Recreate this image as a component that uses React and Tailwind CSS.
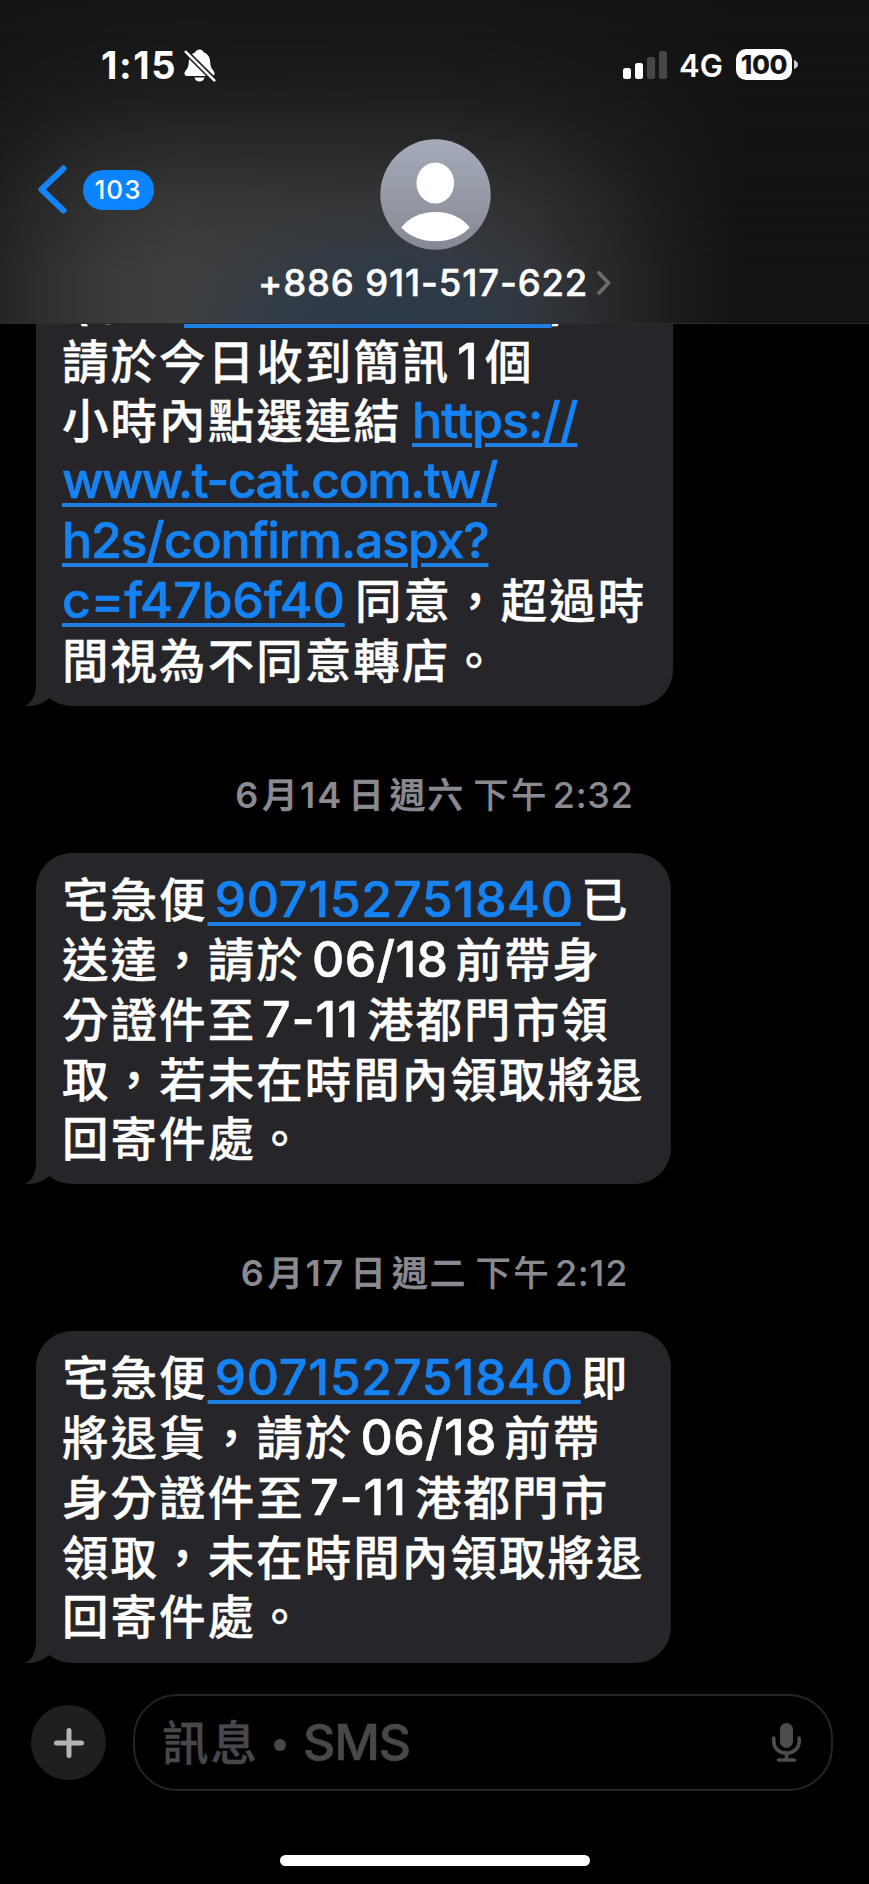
const LATIN = "font-['Inter','Noto_Sans_CJK_TC',sans-serif]";
const CJK = "font-['Noto_Sans_CJK_TC','Inter',sans-serif]";

function Han({ children, className = "" }) {
  return (
    <span className={`${CJK} text-[46.5px] tracking-[2.05px] [-webkit-text-stroke:0.35px] ${className}`}>
      {children}
    </span>
  );
}

function Num({ children, className = "" }) {
  return (
    <span className={`${LATIN} text-[50px] font-medium [-webkit-text-stroke:0.6px] ${className}`}>
      {children}
    </span>
  );
}

function Link({ children, className = "" }) {
  return (
    <a
      className={`${LATIN} whitespace-pre text-[50px] font-medium text-[#1683f5] underline decoration-[#1f7fe2] decoration-[4px] underline-offset-[5px] [-webkit-text-stroke:0.6px] ${className}`}
    >
      {children}
    </a>
  );
}

function Line({ children }) {
  return (
    <div className="flex h-[59.8px] items-baseline whitespace-nowrap leading-[40px] before:h-[49.3px] before:w-0 before:content-['']">
      {children}
    </div>
  );
}

function Bubble({ children, className = "" }) {
  return (
    <div
      className={`relative ml-9 rounded-[36px] bg-[#26252a] pl-[26px] font-medium text-white ${className}`}
    >
      {children}
      <svg
        className="absolute bottom-0 -left-3"
        width="40"
        height="40"
        viewBox="0 0 40 40"
        fill="#26252a"
      >
        <path d="M12 0V18C12 29 8 37 .5 40C10 41 19 37.500 26 31.500L32 20Z" />
      </svg>
    </div>
  );
}

function StampHan({ children, className = "" }) {
  return (
    <span className={`${CJK} text-[35.500px] tracking-[2.200px] ${className}`}>{children}</span>
  );
}

function Stamp({ month, day, weekday, time, className = "" }) {
  return (
    <div
      className={`flex h-[40px] items-baseline justify-center whitespace-nowrap font-medium text-[#8b8a90] ${LATIN} text-[36px] leading-[40px] ${className}`}
    >
      <span className="w-[27px] font-semibold">{month}</span>
      <StampHan className="[-webkit-text-stroke:0.7px]">月</StampHan>
      <span className="mr-[5px] font-semibold tracking-[2px]">{day}</span>
      <StampHan className="[-webkit-text-stroke:0.7px]">日</StampHan>
      <StampHan className="ml-[4px] [-webkit-text-stroke:0.7px]">{weekday}</StampHan>
      <StampHan className="ml-[8px]">下午</StampHan>
      <span className="ml-[4px] tracking-[0.800px]">{time}</span>
    </div>
  );
}

function BellOff() {
  return (
    <svg width="32" height="33" viewBox="0 0 32 33" fill="none">
      <path
        d="M15.500 0.500C13.500.500 11.800 1.800 11.300 3.300C7 5 5 8.500 4.800 13C4.600 17.500 3.600 19.500 1.600 21.800C-.4 24 .3 27 3 27H28C30.800 27 31.400 24 29.400 21.800C27.400 19.500 26.400 17.500 26.200 13C26 8.500 24 5 19.700 3.300C19.200 1.800 17.500.500 15.500.500Z"
        fill="#fff"
      />
      <path d="M10.500 28.600H20.500C20 31 18 32.600 15.500 32.600S11 31 10.500 28.600Z" fill="#fff" />
      <path d="M1.500 2.500L30.500 31.500" stroke="#171717" strokeWidth="5.500" />
      <path d="M1.800 2.800L30.300 31.300" stroke="#fff" strokeWidth="2.600" strokeLinecap="round" />
    </svg>
  );
}

function StatusBar() {
  return (
    <div className="relative flex h-[130px] items-start pt-[44px]">
      <div className="ml-[101px] flex h-[42px] w-[83px] items-center text-[38px] font-bold tracking-[1.600px]">
        1:15
      </div>
      <div className="mt-[5px]">
        <BellOff />
      </div>
      <div className="ml-[407px] mt-[7px] flex h-[27.500px] w-[44px] items-end gap-1">
        <div className="h-[10.500px] w-2 rounded-[2.500px] bg-white" />
        <div className="h-[16px] w-2 rounded-[2.500px] bg-white" />
        <div className="h-[21.500px] w-2 rounded-[2.500px] bg-[#464646]" />
        <div className="h-[27.500px] w-2 rounded-[2.500px] bg-[#464646]" />
      </div>
      <div className="ml-[12px] mt-[1px] flex h-[42px] w-[57px] items-center text-[31px] font-semibold">
        4G
      </div>
      <div className="mt-[5px] flex h-[31px] w-[56px] items-center justify-center rounded-[10px] bg-white text-[26px] font-extrabold tracking-[-0.300px] text-[#151515]">
        100
      </div>
      <svg className="ml-[1.500px] mt-[16px]" width="4" height="9" viewBox="0 0 4 9">
        <path d="M0 0C2.500 1 4 2.500 4 4.500S2.500 8 0 9Z" fill="#d0d0d0" />
      </svg>
    </div>
  );
}

function Avatar() {
  return (
    <svg width="111" height="111" viewBox="0 0 111 111">
      <defs>
        <linearGradient id="avatar" x1="0" y1="0" x2="0" y2="1">
          <stop offset="0" stopColor="#a5abb9" />
          <stop offset="1" stopColor="#858994" />
        </linearGradient>
      </defs>
      <circle cx="55.500" cy="55.500" r="55.200" fill="url(#avatar)" />
      <ellipse cx="55.300" cy="44" rx="18.800" ry="20.600" fill="#fff" />
      <path
        d="M21.300 88.500C29 78.500 41 73 55.500 73S82 78.500 89.700 88.500C81.500 97.500 69 102.300 55.500 102.300S29.500 97.500 21.300 88.500Z"
        fill="#fff"
      />
    </svg>
  );
}

function Header() {
  return (
    <header
      className={`relative h-[324px] shrink-0 overflow-hidden border-b border-[#2c2c2e] bg-[#131313] text-white ${LATIN}`}
    >
      <div className="absolute inset-0 bg-[linear-gradient(to_right,#242424_0px,#303030_50px,#3a3a3a_110px,#404040_180px,#3d3e3f_300px,#3c3d3f_450px,#363638_530px,#2a2a2c_600px,#1b1b1b_680px,#131313_740px)] [mask-image:linear-gradient(to_bottom,rgba(0,0,0,0.06)_0px,rgba(0,0,0,0.14)_60px,rgba(0,0,0,0.3)_105px,rgba(0,0,0,0.55)_150px,rgba(0,0,0,0.8)_200px,black_270px)]" />
      <div className="absolute inset-0 bg-[radial-gradient(ellipse_240px_130px_at_385px_323px,rgba(38,56,76,0.72)_0%,rgba(38,56,76,0.55)_40%,rgba(38,56,76,0.18)_75%,rgba(38,56,76,0)_100%)]" />
      <StatusBar />
      <div className="relative flex h-[193px]">
        <div className="flex w-[380px] items-start">
          <svg className="ml-[36px] mt-[34px]" width="34" height="50" viewBox="0 0 34 50" fill="none">
            <path
              d="M27.500 4.500L5.500 25.500L27.500 46.500"
              stroke="#1583f6"
              strokeWidth="6"
              strokeLinecap="round"
              strokeLinejoin="round"
            />
          </svg>
          <div className="ml-[12.500px] mt-[39.500px] flex h-[40.500px] w-[71px] items-center justify-center rounded-full bg-[#0d84ff] text-[26px] font-medium tracking-[1px]">
            103
          </div>
        </div>
        <div className="pt-[9px]">
          <Avatar />
        </div>
        <div className="absolute left-[258px] top-[132px] flex items-center">
          <span className="w-[330px] whitespace-nowrap text-[36.500px] font-medium leading-[42px] tracking-[0.850px] [-webkit-text-stroke:0.5px]">
            +886 911-517-622
          </span>
          <svg className="ml-[7px]" width="18" height="26" viewBox="0 0 18 26" fill="none">
            <path
              d="M4 3L13.500 13L4 23"
              stroke="#6c6c6f"
              strokeWidth="3.800"
              strokeLinecap="round"
              strokeLinejoin="round"
            />
          </svg>
        </div>
      </div>
    </header>
  );
}

function Composer() {
  return (
    <footer className="flex items-center pl-[31px] pt-[31px]">
      <button className="flex size-[75px] items-center justify-center rounded-full bg-[#1f1f22]">
        <svg width="30" height="30" viewBox="0 0 30 30" fill="none">
          <path
            d="M15 2.500V27.500M2.500 15H27.500"
            stroke="#b4b4b5"
            strokeWidth="5"
            strokeLinecap="round"
          />
        </svg>
      </button>
      <div className="ml-[27px] flex h-[97px] w-[700px] items-center justify-between rounded-[44px] border-2 border-[#242426] pl-[27px] pr-[30px] font-medium text-[#48484c]">
        <div className="-mt-[3px] flex items-baseline leading-[60px]">
          <Han>訊息</Han>
          <span className="ml-[15px] mr-[17px] size-[12px] -translate-y-[9px] rounded-full bg-[#48484c]" />
          <Num className="tracking-[-1.200px]">SMS</Num>
        </div>
        <svg width="29" height="39" viewBox="0 0 29 39" fill="none">
          <rect x="8" y="0" width="13" height="25" rx="6.500" fill="#4d4d4f" />
          <path
            d="M1.800 15V18C1.800 25.500 7.200 30 14.500 30S27.200 25.500 27.200 18V15M14.500 30V37M6.500 37H22.500"
            stroke="#4d4d4f"
            strokeWidth="3.600"
            strokeLinecap="round"
          />
        </svg>
      </div>
    </footer>
  );
}

export default function App() {
  return (
    <div className="flex h-[1884px] w-[869px] flex-col overflow-hidden bg-black">
      <Header />
      <main className="flex h-[1339px] shrink-0 flex-col overflow-hidden">
        <Bubble className="-mt-[54.500px] h-[436.500px] w-[636.500px] shrink-0">
          <Line>
            <Num className="ml-[9px] w-[14px]">(</Num>
            <Han className="w-[99px]">單號</Han>
            <Link className="w-[369px] tracking-[0.850px] [word-spacing:-7px]"> 907152751840</Link>
            <Num className="-ml-[3px]">)</Num>
          </Line>
          <Line>
            <Han className="w-[395px]">請於今日收到簡訊</Han>
            <Num className="w-[28px]">1</Num>
            <Han>個</Han>
          </Line>
          <Line>
            <Han className="w-[350px]">小時內點選連結</Han>
            <Link className="tracking-[-0.900px]">https://</Link>
          </Line>
          <Line>
            <Link className="tracking-[-1.560px]">www.t-cat.com.tw/</Link>
          </Line>
          <Line>
            <Link className="tracking-[-1.150px]">h2s/confirm.aspx?</Link>
          </Line>
          <Line>
            <Link className="w-[293px]">c=f47b6f40</Link>
            <Han>同意，超過時</Han>
          </Line>
          <Line>
            <Han>間視為不同意轉店。</Han>
          </Line>
        </Bubble>

        <Stamp className="mt-[67px]" month="6" day="14" weekday="週六" time="2:32" />

        <Bubble className="mt-[40px] h-[331px] w-[635px] shrink-0 pt-[15px]">
          <Line>
            <Han className="w-[145.500px]">宅急便</Han>
            <Link className="w-[373.500px] tracking-[0.750px] [word-spacing:-7px]"> 907152751840 </Link>
            <Han>已</Han>
          </Line>
          <Line>
            <Han className="w-[250px]">送達，請於</Han>
            <Num className="w-[143.500px] tracking-[0.400px]">06/18</Num>
            <Han>前帶身</Han>
          </Line>
          <Line>
            <Han className="w-[200px]">分證件至</Han>
            <Num className="w-[105px] tracking-[0.900px]">7-11</Num>
            <Han>港都門市領</Han>
          </Line>
          <Line>
            <Han>取，若未在時間內領取將退</Han>
          </Line>
          <Line>
            <Han>回寄件處。</Han>
          </Line>
        </Bubble>

        <Stamp className="mt-[67px]" month="6" day="17" weekday="週二" time="2:12" />

        <Bubble className="mt-[40px] h-[332px] w-[635px] shrink-0 pt-[15px]">
          <Line>
            <Han className="w-[145.500px]">宅急便</Han>
            <Link className="w-[373.500px] tracking-[0.750px] [word-spacing:-7px]"> 907152751840 </Link>
            <Han>即</Han>
          </Line>
          <Line>
            <Han className="w-[298.500px]">將退貨，請於</Han>
            <Num className="w-[143.500px] tracking-[0.400px]">06/18</Num>
            <Han>前帶</Han>
          </Line>
          <Line>
            <Han className="w-[248px]">身分證件至</Han>
            <Num className="w-[105px] tracking-[0.900px]">7-11</Num>
            <Han>港都門市</Han>
          </Line>
          <Line>
            <Han>領取，未在時間內領取將退</Han>
          </Line>
          <Line>
            <Han>回寄件處。</Han>
          </Line>
        </Bubble>
      </main>
      <Composer />
      <div className="mt-[64px] flex justify-center">
        <div className="h-[11px] w-[310px] rounded-full bg-white" />
      </div>
    </div>
  );
}
